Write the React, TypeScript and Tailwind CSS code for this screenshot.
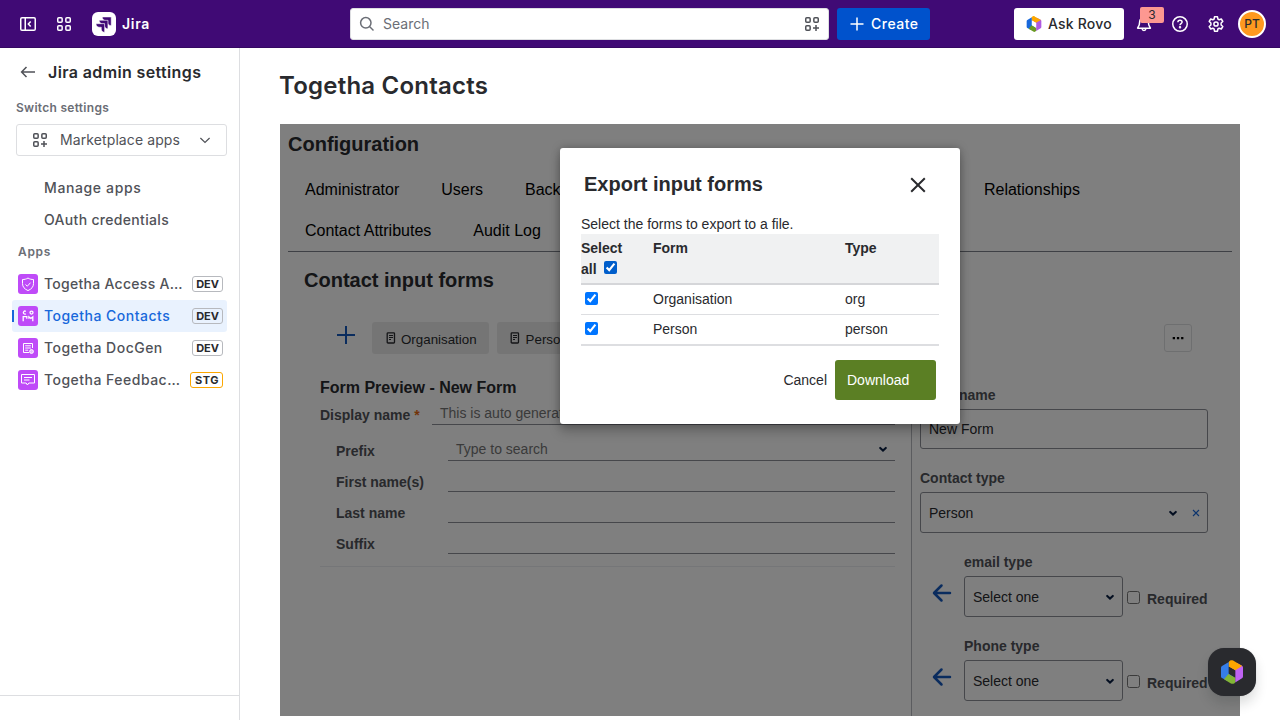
import type { ReactNode } from 'react';
import { clsx } from 'clsx';

interface IconProps {
  className?: string;
}

interface SidebarApp {
  name: string;
  tag: string;
  icon: ReactNode;
  active?: boolean;
  tight?: boolean;
}

const TABS = [
  ['Administrator', 'Users', 'Backup'],
  ['Contact Attributes', 'Audit Log'],
];

const PREVIEW_FIELDS = ['First name(s)', 'Last name', 'Suffix'];

const EXPORT_FORMS = [
  { name: 'Organisation', type: 'org' },
  { name: 'Person', type: 'person' },
];

function SidebarCollapseIcon() {
  return (
    <svg width="16" height="16" viewBox="0 0 16 16" fill="none" stroke="currentColor" strokeWidth="1.5">
      <rect x="0.75" y="1.75" width="14.5" height="12.5" rx="1.25" />
      <path d="M5.25 2v12M10.7 5.4 8.3 8l2.4 2.6" />
    </svg>
  );
}

function GridIcon() {
  return (
    <svg width="16" height="16" viewBox="0 0 16 16" fill="none" stroke="currentColor" strokeWidth="1.5">
      <rect x="1.75" y="1.75" width="4.4" height="4.4" rx="1" />
      <rect x="9.85" y="1.75" width="4.4" height="4.4" rx="1" />
      <rect x="1.75" y="9.85" width="4.4" height="4.4" rx="1" />
      <rect x="9.85" y="9.85" width="4.4" height="4.4" rx="1" />
    </svg>
  );
}

function AppsAddIcon({ className }: IconProps) {
  return (
    <svg className={className} width="16" height="16" viewBox="0 0 16 16" fill="none" stroke="currentColor" strokeWidth="1.5">
      <rect x="1.75" y="1.75" width="4.4" height="4.4" rx="1" />
      <rect x="9.85" y="1.75" width="4.4" height="4.4" rx="1" />
      <rect x="1.75" y="9.85" width="4.4" height="4.4" rx="1" />
      <path d="M12 9v6M9 12h6" />
    </svg>
  );
}

function JiraLogo() {
  return (
    <svg width="24" height="24" viewBox="0 0 24 24">
      <rect width="24" height="24" rx="6" fill="#fff" />
      <g fill="#400a75" stroke="#fff" strokeWidth="0.5">
        <path d="M10.3 5H19.2v8.6c-2 0-3.4-1.3-3.4-3.2V8.500h-2c-2 0-3.500-1.500-3.500-3.500z" />
        <path d="M7.2 8.300h8.700v8.500c-2 0-3.400-1.300-3.400-3.200v-1.800h-1.900c-2 0-3.400-1.500-3.400-3.500z" />
        <path d="M4 11.700h8.600v8.500c-2 0-3.300-1.300-3.300-3.200v-1.800H7.400c-2 0-3.400-1.500-3.400-3.500z" />
      </g>
    </svg>
  );
}

function RovoLogo({ size, light }: { size: number; light?: boolean }) {
  return (
    <svg width={size} height={size} viewBox="0 0 24 24">
      <path d="M1 7.800c0-.8.300-1.300 1-1.700L8.800 2v11.600l5.800 3.700L7 20.800l-5-2.700c-.6-.4-1-.9-1-1.600z" fill={light ? '#357de8' : '#1868db'} />
      <path d="M23 7.400v9.200c0 .8-.3 1.300-1 1.700l-6.800 4.200V10.300L9.500 6.800 17 3l5 2.800c.6.400 1 .9 1 1.600z" fill={light ? '#bf63f3' : '#af59e1'} />
      <path d="M8.800 1.900C9.600.3 11.500-.3 13.100.6L22.200 5.900l-7 4.400-6.400-3.600z" fill="#fca700" />
      <path d="m8.400 14 6.800 3.600v4.600c-.8 1.500-2.700 2.100-4.300 1.200L4 19.300z" fill={light ? '#82b536' : '#6a9a23'} />
      <path d="m8.800 6.700 6.400 3.700v7.100l-6.400-3.700z" fill={light ? '#292a2e' : '#fff'} />
    </svg>
  );
}

function ChevronDown({ className }: IconProps) {
  return (
    <svg className={className} width="10" height="8" viewBox="0 0 10 8" fill="none" stroke="#091e42" strokeWidth="2.1" strokeLinecap="round">
      <path d="M2.200 2.900 5 5.500l2.800-2.600" />
    </svg>
  );
}

function BackArrow() {
  return (
    <svg width="20" height="20" viewBox="0 0 20 20" fill="none" stroke="#1558bc" strokeWidth="2.5" strokeLinecap="round" strokeLinejoin="round">
      <path d="M18 10H2.500M9.500 2.500 2 10l7.500 7.500" />
    </svg>
  );
}

function FormIcon() {
  return (
    <svg width="10" height="12" viewBox="0 0 10 12" fill="none" stroke="#292a2e" strokeWidth="1.3">
      <rect x="1.2" y="0.8" width="7.3" height="10.2" rx="0.8" />
      <path d="M3 3.500h4M3 5.500h4M3 7.500h2" strokeWidth="1" />
    </svg>
  );
}

const SIDEBAR_APPS: SidebarApp[] = [
  {
    name: 'Togetha Access Audit',
    tag: 'DEV',
    tight: true,
    icon: <path d="M10 4c1.700 1.200 3.600 1.500 5.500 1.500v4.100c0 3.200-2 5.500-5.500 7-3.500-1.500-5.500-3.800-5.500-7V5.500C6.400 5.500 8.300 5.200 10 4zM7.500 10.500l1.800 1.700 3.200-3.500" />,
  },
  {
    name: 'Togetha Contacts',
    tag: 'DEV',
    active: true,
    icon: (
      <path
        d="M7.800 5.400a1.500 1.500 0 1 0 0 2.400M12 6.600a1.500 1.500 0 1 0 3 0 1.500 1.500 0 1 0-3 0M5.200 15.200v-4.500h3.600v2M14.800 15.200v-4.400l-1.900 1.600-2-1.600v2"
        strokeWidth="1.3"
      />
    ),
  },
  {
    name: 'Togetha DocGen',
    tag: 'DEV',
    icon: (
      <>
        <path d="M14.500 10V5.500h-9v9H11M7.200 7.800h5.600M7.200 10h5.600M7.200 12.200h3" />
        <circle cx="13.5" cy="13.5" r="1.9" fill="#fff" fillOpacity="0.6" />
      </>
    ),
  },
  {
    name: 'Togetha Feedback Forms',
    tag: 'STG',
    icon: <path d="M3.500 4.500h13V13h-5.700l-1.400 2L8.200 13H3.500zM6 7.500h8M6 10h5.500" />,
  },
];

function TopBar() {
  return (
    <header className="flex h-12 items-center justify-between border-b border-[#350862] bg-[#400a75] text-sm font-medium text-white">
      <div className="flex w-[350px] items-center pl-5">
        <SidebarCollapseIcon />
        <div className="ml-5">
          <GridIcon />
        </div>
        <div className="ml-5">
          <JiraLogo />
        </div>
        <span className="ml-1.5 font-semibold tracking-[0.7px]">Jira</span>
      </div>

      <div className="flex flex-1 gap-2">
        <div className="flex h-8 w-[479px] items-center rounded-[3px] border border-[#dddee1] bg-white pr-2 pl-2 text-[#6b6e76]">
          <svg width="16" height="16" viewBox="0 0 16 16" fill="none" stroke="currentColor" strokeWidth="1.5">
            <circle cx="6.8" cy="6.8" r="5.2" />
            <path d="m10.500 10.500 4 4" />
          </svg>
          <span className="ml-2 flex-1 font-normal">Search</span>
          <AppsAddIcon className="text-[#505258]" />
        </div>
        <button className="flex h-8 w-[93px] items-center rounded-[3px] bg-[#0052cc] pl-3">
          <svg width="16" height="16" viewBox="0 0 16 16" stroke="#fff" strokeWidth="1.5">
            <path d="M8 1.500v13M1.500 8h13" />
          </svg>
          <span className="ml-1.5 tracking-[0.5px]">Create</span>
        </button>
      </div>

      <div className="flex items-center pr-3.5">
        <button className="flex h-8 w-[110px] items-center rounded-[3px] bg-white pl-3 text-[#292a2e]">
          <RovoLogo size={16} />
          <span className="ml-1.5 tracking-[0.2px]">Ask Rovo</span>
        </button>
        <div className="relative ml-3">
          <svg width="16" height="16" viewBox="0 0 16 16" fill="none" stroke="#fff" strokeWidth="1.5" strokeLinejoin="round">
            <path d="M8 1.500c-2.600 0-4.300 1.800-4.300 4.200L3.200 9 1.600 12.200h12.800L12.800 9l-.5-3.300C12.300 3.300 10.600 1.500 8 1.500zM6 12.500c.2 1.300 1 2 2 2s1.800-.7 2-2" />
          </svg>
          <span className="absolute -top-[9px] left-1 flex h-4 w-6 items-center justify-center rounded-[2px] bg-[#fd9891] text-xs font-normal text-[#292a2e]">
            3
          </span>
        </div>
        <svg className="ml-5" width="16" height="16" viewBox="0 0 16 16" fill="none" stroke="#fff" strokeWidth="1.5">
          <circle cx="8" cy="8" r="7.25" />
          <path d="M5.900 6.300c0-1.200.9-2 2.100-2s2.100.7 2.100 1.800c0 1.600-2.100 1.500-2.100 3.200" />
          <circle cx="8" cy="11.3" r="0.5" />
        </svg>
        <svg className="ml-5" width="16" height="16" viewBox="0 0 16 16" fill="none" stroke="#fff" strokeWidth="1.5" strokeLinejoin="round">
          <path d="M6.500.8h3l.4 2.200 1.300.8 2.100-.8 1.500 2.500-1.700 1.500v2l1.700 1.500-1.500 2.500-2.100-.8-1.300.8-.4 2.200h-3L6.100 13l-1.300-.8-2.100.8-1.500-2.500L2.900 9V7L1.200 5.500 2.700 3l2.100.8L6.100 3z" />
          <circle cx="8" cy="8" r="2.1" />
        </svg>
        <div className="ml-3.5 flex h-7 w-7 items-center justify-center rounded-full border-2 border-white bg-[#ff991f] text-xs font-medium text-[#292a2e]">
          PT
        </div>
      </div>
    </header>
  );
}

function Sidebar() {
  return (
    <aside className="flex w-60 flex-col border-r border-[#dddee1] text-sm font-medium text-[#505258]">
      <div className="flex-1 pr-3 pl-3">
        <div className="flex h-12 items-center pl-2">
          <svg width="16" height="16" viewBox="0 0 16 16" fill="none" stroke="currentColor" strokeWidth="1.5">
            <path d="M15 8H2M6.500 3 1.600 8l4.900 5" />
          </svg>
          <h2 className="ml-3 text-base font-semibold tracking-[0.37px] text-[#292a2e]">Jira admin settings</h2>
        </div>
        <div className="ml-1 flex h-6 items-center text-xs font-semibold tracking-[0.28px] text-[#6b6e76]">Switch settings</div>
        <button className="mt-1 ml-1 flex h-8 w-[211px] items-center rounded-[3px] border border-[#dddee1] pr-[13px] pl-[15px] font-normal">
          <AppsAddIcon />
          <span className="ml-3 flex-1 text-left tracking-[0.1px]">Marketplace apps</span>
          <svg width="16" height="16" viewBox="0 0 16 16" fill="none" stroke="currentColor" strokeWidth="1.2">
            <path d="m3.400 6 4.600 4.500L12.600 6" />
          </svg>
        </button>
        <nav className="mt-4">
          <div className="flex h-8 items-center pl-8 tracking-[0.62px]">Manage apps</div>
          <div className="flex h-8 items-center pl-8 tracking-[0.32px]">OAuth credentials</div>
          <div className="flex h-8 items-center pl-1.5 text-xs font-semibold tracking-[0.7px] text-[#6b6e76]">Apps</div>
          {SIDEBAR_APPS.map((app) => (
            <div
              key={app.name}
              className={clsx(
                'relative flex h-8 w-[215px] items-center rounded-[3px] pr-1 pl-1.5',
                app.active && 'bg-[#e9f2fe] text-[#1868db]',
              )}
            >
              {app.active && <span className="absolute left-0 h-3 w-0.5 bg-[#1868db]" />}
              <svg className="shrink-0" width="20" height="20" viewBox="0 0 20 20" fill="none" stroke="#fff" strokeWidth="1">
                <rect width="20" height="20" rx="3" fill="#bf4bf8" stroke="none" />
                {app.icon}
              </svg>
              <span className={clsx('mr-1.5 ml-1.5 flex-1 truncate', app.tight ? 'tracking-[0.28px]' : 'tracking-[0.48px]')}>
                {app.name}
              </span>
              <span
                className={clsx(
                  'flex h-4 shrink-0 items-center rounded-[3px] border pt-px text-[11px] font-bold text-[#292a2e]',
                  app.tag === 'STG' ? 'border-[#fca700] pr-[3px] pl-1 tracking-[0.5px]' : 'border-[#b7b9be] px-[3px]',
                )}
              >
                {app.tag}
              </span>
            </div>
          ))}
        </nav>
      </div>
      <div className="h-[25px] border-t border-[#dddee1]" />
    </aside>
  );
}

function FormPreview() {
  return (
    <section className="w-[575px]">
      <div className="-ml-2 flex h-8 items-center">
        <button className="ml-6 flex w-9 items-start">
          <svg className="-mt-1.5" width="20" height="20" viewBox="0 0 20 20" stroke="#1558bc" strokeWidth="2">
            <path d="M10 1v18M1 10h18" />
          </svg>
        </button>
        <div className="flex gap-2 text-[13.33px] text-[#292a2e]">
          {EXPORT_FORMS.map((form) => (
            <button key={form.name} className="flex h-8 items-center rounded-[3px] bg-[#ebebeb] pr-3 pl-[13.5px]">
              <span className="mr-[5.5px]">
                <FormIcon />
              </span>
              <span className="mt-[3px]">{form.name}</span>
            </button>
          ))}
        </div>
      </div>
      <h3 className="mt-6 h-[19px] text-base leading-5 font-bold">Form Preview - New Form</h3>
      <div className="flex h-7">
        <label className="w-28 pt-2 leading-5 font-bold text-[#505258]">
          Display name <span className="text-[#e56910]">*</span>
        </label>
        <div className="flex-1 border-b border-[#8c8f97] px-2 pt-1.5 text-[#757575]">This is auto generated</div>
      </div>
      <div className="mt-[5px] pl-4">
        <div className="flex h-[31px]">
          <label className="w-28 pt-[11px] leading-5 font-bold text-[#505258]">Prefix</label>
          <div className="flex flex-1 items-center justify-between border-b border-[#8c8f97] px-2 pt-2 text-[#757575]">
            <span>Type to search</span>
            <ChevronDown className="-mr-px" />
          </div>
        </div>
        {PREVIEW_FIELDS.map((label) => (
          <div key={label} className="flex h-[31px]">
            <label className="w-28 pt-[11px] leading-5 font-bold text-[#505258]">{label}</label>
            <div className="flex-1 border-b border-[#8c8f97]" />
          </div>
        ))}
      </div>
      <hr className="mt-3 border-[#ebecf0]" />
    </section>
  );
}

function AttributeSelect({ label }: { label: string }) {
  return (
    <div className="mb-3 flex h-[72px] items-end pl-3">
      <div className="mb-[14px] w-8">
        <BackArrow />
      </div>
      <div className="w-[159px]">
        <label className="block h-6 leading-5 font-bold text-[#505258]">{label}</label>
        <div className="flex h-[41px] items-center justify-between rounded-[3px] border border-[#8c8f97] pr-[7px] pl-2">
          <span>Select one</span>
          <ChevronDown />
        </div>
      </div>
      <div className="mb-2 flex items-center font-bold text-[#505258]">
        <input type="checkbox" className="mr-[7px] mb-1 ml-1 h-[13px] w-[13px]" />
        Required
      </div>
    </div>
  );
}

function FormSettings() {
  return (
    <section className="ml-4 flex flex-1 flex-col">
      <div className="flex h-[61px] shrink-0 justify-end pt-0.5 pr-6">
        <button className="flex h-7 w-7 items-center justify-center rounded-[3px] border border-[#dddee1]">
          <svg width="12" height="4" viewBox="0 0 12 4">
            <path d="M.7 1h2.300v2.200H.7zM4.900 1h2.300v2.200H4.900zM9.100 1h2.300v2.200H9.100z" />
          </svg>
        </button>
      </div>
      <div className="flex-1 border-l border-[#b7b9be] pl-2">
        <div className="w-[288px]">
          <label className="block h-[26px] pt-0.5 leading-5 font-bold text-[#505258]">Form name</label>
          <div className="flex h-10 items-center rounded-[3px] border border-[#8c8f97] px-2">New Form</div>
          <label className="mt-[19px] block h-6 leading-5 font-bold text-[#505258]">Contact type</label>
          <div className="flex h-[41px] items-center rounded-[3px] border border-[#8c8f97] pr-[7px] pl-2">
            <span className="flex-1">Person</span>
            <ChevronDown />
            <svg className="ml-3.5" width="8" height="8" viewBox="0 0 8 8" stroke="#1868db" strokeWidth="1.1">
              <path d="m1 1 6 6M7 1 1 7" />
            </svg>
          </div>
          <div className="pt-3">
            <AttributeSelect label="email type" />
            <AttributeSelect label="Phone type" />
          </div>
        </div>
      </div>
    </section>
  );
}

function ExportDialog() {
  return (
    <div
      role="dialog"
      className="flex h-[276px] w-[400px] flex-col rounded-[3px] bg-white px-[21px] text-[#292a2e] shadow-[0_8px_12px_rgba(0,0,0,0.2),0_0_8px_rgba(0,0,0,0.25)]"
    >
      <div className="flex h-[66px] items-center justify-between pt-[7px] pr-3 pl-[3px]">
        <h2 className="-mt-0.5 text-xl font-bold">Export input forms</h2>
        <svg width="18" height="18" viewBox="0 0 18 18" stroke="currentColor" strokeWidth="2">
          <path d="m2.200 2.200 13.600 13.600M15.800 2.200 2.200 15.800" />
        </svg>
      </div>
      <p className="h-5 leading-5">Select the forms to export to a file.</p>
      <table className="w-full table-fixed border-collapse text-left">
        <colgroup>
          <col className="w-[72px]" />
          <col className="w-[192px]" />
          <col />
        </colgroup>
        <thead className="bg-[#f0f1f2]">
          <tr className="h-[50px] border-b-2 border-[#d5d6d9] align-top leading-[21px]">
            <th className="pt-1 font-bold">
              Select
              <br />
              all <input type="checkbox" defaultChecked className="ml-1 h-[13px] w-[13px] accent-[#005ecb]" />
            </th>
            <th className="pt-1 font-bold">Form</th>
            <th className="pt-1 font-bold">Type</th>
          </tr>
        </thead>
        <tbody className="border-b-2 border-[#dddee1]">
          {EXPORT_FORMS.map((form) => (
            <tr key={form.name} className="h-[30px] border-t border-[#dddee1] last:h-[31px]">
              <td>
                <input type="checkbox" defaultChecked className="mb-0.5 ml-1 block h-[13px] w-[13px] accent-[#0075ff]" />
              </td>
              <td>{form.name}</td>
              <td>{form.type}</td>
            </tr>
          ))}
        </tbody>
      </table>
      <div className="mt-3.5 mr-[3px] flex items-center justify-end">
        <button className="mr-2">Cancel</button>
        <button className="h-10 w-[101px] rounded-[3px] bg-[#5b7f24] pl-3 text-left text-white">Download</button>
      </div>
    </div>
  );
}

function ConfigurationPanel() {
  return (
    <div className="relative h-[592px] w-[960px] overflow-hidden bg-white px-2 font-['Liberation_Sans',sans-serif] text-sm text-[#292a2e]">
      <h2 className="h-[45px] pt-1.5 text-xl leading-7 font-bold">Configuration</h2>
      <div className="h-[83px] border-b border-[#7d818a] text-base text-black">
        {TABS.map((row, i) => (
          <div key={i} className="-ml-1 flex h-[41px] items-center">
            {row.map((tab) => (
              <span key={tab} className="px-[21px] whitespace-nowrap">
                {tab}
              </span>
            ))}
            {i === 0 && <span className="mr-[131px] ml-auto px-[21px]">Relationships</span>}
          </div>
        ))}
      </div>
      <div className="px-4">
        <h2 className="h-[70px] pt-3.5 text-xl leading-7 font-bold">Contact input forms</h2>
        <div className="flex h-[394px] pl-4">
          <FormPreview />
          <FormSettings />
        </div>
      </div>
      <div className="absolute inset-0 flex items-start justify-center bg-black/50 pt-6">
        <ExportDialog />
      </div>
    </div>
  );
}

export default function App() {
  return (
    <div className="relative h-[720px] w-[1280px] overflow-hidden bg-white font-['Inter',sans-serif]">
      <TopBar />
      <div className="flex h-[672px]">
        <Sidebar />
        <main className="pl-10">
          <h1 className="-ml-px flex h-[76px] items-center text-2xl font-semibold tracking-[0.22px] text-[#292a2e]">Togetha Contacts</h1>
          <ConfigurationPanel />
        </main>
      </div>
      <button className="absolute right-6 bottom-6 flex h-12 w-12 items-center justify-center rounded-2xl bg-[#292a2e] shadow-[0_8px_12px_rgba(30,31,33,0.15),0_0_1px_rgba(30,31,33,0.3)]">
        <RovoLogo size={24} light />
      </button>
    </div>
  );
}
